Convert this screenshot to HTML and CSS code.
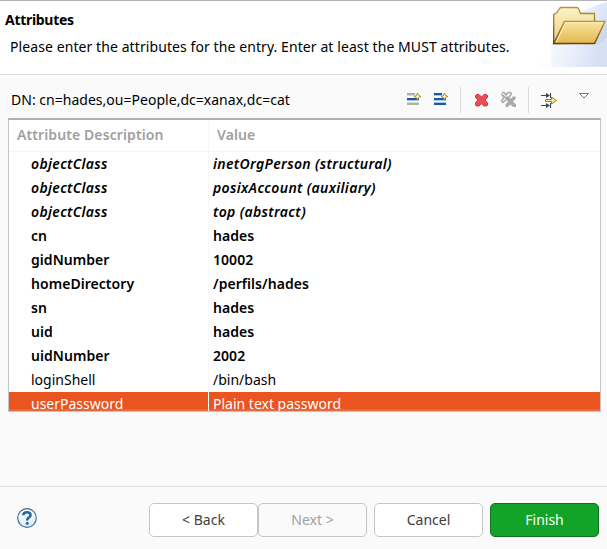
FILE: index.html
```html
<!DOCTYPE html>
<html lang="en">
<head>
<meta charset="utf-8">
<title>Attributes</title>
<link rel="stylesheet" href="styles.css">
</head>
<body>
<header class="banner">
  <div class="banner-text">
    <h1>Attributes</h1>
    <p>Please enter the attributes for the entry. Enter at least the MUST attributes.</p>
  </div>
  <svg class="folder" width="90" height="66" viewBox="0 0 90 66">
    <defs>
      <linearGradient id="glow" x1="0" y1="0" x2="1" y2=".4"><stop offset="0" stop-color="#fbfcff"/><stop offset=".5" stop-color="#edf2fb"/><stop offset="1" stop-color="#d6e1f6"/></linearGradient>
      <linearGradient id="back" x1="0" y1="0" x2="0" y2="1"><stop offset="0" stop-color="#fbf2c9"/><stop offset="1" stop-color="#edcf80"/></linearGradient>
      <linearGradient id="front" x1="0" y1="0" x2="0" y2="1"><stop offset="0" stop-color="#f8e3a0"/><stop offset="1" stop-color="#e5b850"/></linearGradient>
      <linearGradient id="edge" x1="0" y1="0" x2="0" y2="1"><stop offset="0" stop-color="#b99534"/><stop offset="1" stop-color="#6e4310"/></linearGradient>
    </defs>
    <path d="M34 66V44L60 14Q74 5 90 1V66Z" fill="url(#glow)"/>
    <path d="M23 66V62H34V66Z" fill="#fafcff"/>
    <path d="M78 43L88 25L90 24V35Q87 42 79 44Z" fill="#c6c9dd" opacity=".45"/>
    <path d="M36.7 42.500V13.5L39.5 12L42.5 7.5Q43 6.500 44.500 6.500H59.500Q61 6.500 61.500 7.500L63.500 12.5H77.5V42Z" fill="url(#back)" stroke="url(#edge)" stroke-width="1.3"/>
    <path d="M36.7 42.500L47.5 20.500H88L77.5 42.500Z" fill="url(#front)" stroke="url(#edge)" stroke-width="1.4"/>
    <path d="M39.3 41.2L48.4 21.8H86" fill="none" stroke="#fff3c5"/>
  </svg>
</header>
<main>
  <div class="toolbar">
    <div class="dn">DN: cn=hades,ou=People,dc=xanax,dc=cat</div>
    <svg class="tools" width="200" height="36" viewBox="400 84 200 36">
      <defs>
        <path id="plus" d="M10.5 1L11.500 3.500L14 4.500L11.500 5.500L10.5 8L9.500 5.500L7 4.500L9.500 3.500Z" fill="#fdf6cf" stroke="#b08a16"/>
      </defs>
      <g transform="translate(407 92)"><path d="M0 2H8M0 12H12" stroke="#b0b0b0" stroke-width="2"/><path d="M0 3.500H8M0 10.500H12" stroke="#dcdcdc"/><path d="M0 8.500H12" stroke="#a3c9e8"/><path d="M0 7H12" stroke="#175d9e" stroke-width="2"/><use href="#plus"/></g>
      <g transform="translate(434 92)"><path d="M0 2H8M0 7H12M0 12H12" stroke="#175d9e" stroke-width="2"/><path d="M0 3.500H8M0 8.500H12M0 10.500H12" stroke="#a3c9e8"/><use href="#plus"/></g>
      <path d="M460.500 87V113M528.500 87V113" stroke="#dcdcdc"/>
      <path d="M476.500 94.500H479L481.500 97L484 94.500H486.500L487.500 95.500V97.500L485 100L487.500 103V105L486.500 106H484L481.500 103.500L479 106H476.500L475.500 105V103L478 100L475.500 97.500V95.500Z" fill="#e95055" stroke="#d3363f"/>
      <path d="M502 92.500H504L506 95L508 92.500H510.500L511.500 94L509 97L510 99M507 99L503 102.500L501.500 101L504 97.500L501.500 94Z" fill="#f5f5f5" stroke="#aaa" stroke-width="1.500"/>
      <path d="M506 96.500H508.500L510.500 99L513 96.500H515.500V99L513 101.500L516 104.500V107H513L510.500 104.500L508 107H505.500V104.500L508 101.500L505.500 99Z" fill="#aaa"/>
      <path d="M541 95.500H548M541 105.500H548M550.500 93V98M550.500 103V108" stroke="#34495e"/><path d="M546 93L550 95.500L546 98ZM546 103L550 105.500L546 108Z" fill="#34495e"/>
      <path d="M545.500 99.500H551.500V97L556.500 100.500L551.500 104V101.500H545.500Z" fill="#fae69a" stroke="#b07c0a"/>
      <path d="M579.500 93.500H588.500L584 98Z" fill="#fff" stroke="#77776f"/>
    </svg>
  </div>
  <div class="table">
    <div class="row head"><div>Attribute Description</div><div>Value</div></div>
    <div class="row oc"><div>objectClass</div><div>inetOrgPerson (structural)</div></div>
    <div class="row oc"><div>objectClass</div><div>posixAccount (auxiliary)</div></div>
    <div class="row oc"><div>objectClass</div><div>top (abstract)</div></div>
    <div class="row must"><div>cn</div><div>hades</div></div>
    <div class="row must"><div>gidNumber</div><div>10002</div></div>
    <div class="row must"><div>homeDirectory</div><div>/perfils/hades</div></div>
    <div class="row must"><div>sn</div><div>hades</div></div>
    <div class="row must"><div>uid</div><div>hades</div></div>
    <div class="row must"><div>uidNumber</div><div>2002</div></div>
    <div class="row"><div>loginShell</div><div>/bin/bash</div></div>
    <div class="row selected"><div>userPassword</div><div>Plain text password</div></div>
  </div>
</main>
<footer>
  <svg class="help" width="20" height="20" viewBox="0 0 20 20"><defs><linearGradient id="hg" x1="0" y1="0" x2="0" y2="1"><stop offset="0" stop-color="#fff"/><stop offset="1" stop-color="#dcecf4"/></linearGradient></defs><circle cx="10" cy="10" r="9.300" fill="url(#hg)" stroke="#3c6e9f" stroke-width="1.200"/><path d="M6.300 7.300Q6.400 4.300 10 4.300T13.500 7.200Q13.500 8.800 11.800 9.700Q10.200 10.500 10.200 12.500" fill="none" stroke="#2a639c" stroke-width="2.600"/><circle cx="10.200" cy="15.300" r="1.500" fill="#2a639c"/></svg>
  <button class="back">&lt; Back</button>
  <button class="next" disabled>Next &gt;</button>
  <button class="cancel">Cancel</button>
  <button class="finish">Finish</button>
</footer>
</body>
</html>
```
FILE: styles.css
```css
* { box-sizing: border-box; }
body { margin: 0; width: 607px; height: 549px; display: flex; flex-direction: column; background: #fafafa; color: #000; font: 14px/24px "Noto Sans", sans-serif; overflow: hidden; }
.banner { height: 75px; display: flex; justify-content: space-between; background: #fff; border-top: 1px solid #b4b4b4; border-bottom: 1px solid #dcdcdc; }
.banner-text { padding: 7px 0 0 5px; white-space: nowrap; }
h1 { margin: 0; font-size: 14px; line-height: 24px; letter-spacing: -.3px; }
p { margin: 3px 0 0 5px; letter-spacing: .085px; }
.folder { margin: 0 0 0 -90px; flex: none; }
main { flex: 1; padding: 9px 6px 0 8px; }
.toolbar { display: flex; justify-content: space-between; height: 34px; }
.dn { padding: 4px 0 0 3px; letter-spacing: .02px; white-space: nowrap; }
.tools { margin-right: 1px; flex: none; }
.table { height: 294px; border: 1px solid #c4c4c4; border-top: 2px solid #b0b0b0; background: #fff; overflow: hidden; }
.row { display: grid; grid-template-columns: 199px 1fr; height: 24px; white-space: nowrap; }
.row > div { padding-left: 22px; }
.row > div + div { padding-left: 4px; border-left: 1px solid #f7f7f7; }
.head { height: 32px; line-height: 29px; border-bottom: 1px solid #f5f5f5; color: #a0a0a0; font-weight: 600; letter-spacing: .1px; }
.head > div { padding-left: 8px; }
.head > div + div { padding-left: 8px; }
.oc { font-weight: 600; font-style: italic; letter-spacing: .34px; }
.must { font-weight: 600; letter-spacing: .05px; }
.selected { background: linear-gradient(#e95420 17px, #df6c43 17px); color: #fff; }
.selected > div + div { border-color: #fff; }
footer { height: 63px; border-top: 1px solid #dcdcdc; display: flex; align-items: flex-start; padding: 16px 8px 0 17px; }
.help { margin: 5px 112px 0 0; }
button { width: 109px; height: 34px; padding: 0; border: 1px solid #c6c6c6; border-radius: 5px; background: #fff; color: #3d3d3d; font: 14px/30px "Noto Sans", sans-serif; }
.next { background: #fafafa; color: #a0a0a0; }
.cancel { margin-left: 7px; }
.finish { margin-left: 7px; background: #12a428; border-color: #14701f; color: #fff; }
```
